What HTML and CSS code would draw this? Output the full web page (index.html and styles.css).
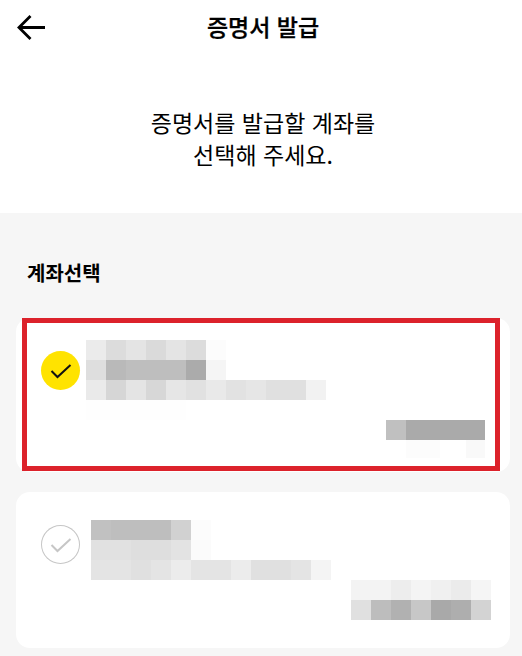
FILE: index.html
```
<!DOCTYPE html>
<html lang="ko">
<head>
    <meta charset="UTF-8">
    <meta name="viewport" content="width=device-width, initial-scale=1.0">
    <title>증명서 발급</title>
    <link rel="stylesheet" href="styles.css">
</head>
<body>
    <header class="header">
        <button class="back" aria-label="뒤로">
            <svg width="30" height="28" viewBox="0 0 30 28">
                <path d="M13.5 2 L2 13.5 L13.5 25 M2 13.5 H28"/>
            </svg>
        </button>
        <h1 class="title">증명서 발급</h1>
    </header>

    <p class="guide">증명서를 발급할 계좌를<br>선택해 주세요.</p>

    <main class="accounts">
        <h2 class="accounts-title">계좌선택</h2>

        <div class="card card-first">
            <div class="highlight"></div>
            <span class="check checked">
                <svg width="39" height="39" viewBox="0 0 39 39"><path d="M10.5 20 L16.5 26 L29.5 14"/></svg>
            </span>
            <div class="info">
                <!-- masked account name and number -->
                <svg class="mask" width="240" height="80" shape-rendering="crispEdges">
                    <rect x="0" y="0" width="20" height="20" fill="#ebebeb"/>
                    <rect x="20" y="0" width="20" height="20" fill="#dcdcdc"/>
                    <rect x="40" y="0" width="20" height="20" fill="#e4e4e4"/>
                    <rect x="60" y="0" width="20" height="20" fill="#dadada"/>
                    <rect x="80" y="0" width="20" height="20" fill="#e4e4e4"/>
                    <rect x="100" y="0" width="20" height="20" fill="#dcdcdc"/>
                    <rect x="120" y="0" width="20" height="20" fill="#fcfcfc"/>
                    <rect x="0" y="20" width="20" height="20" fill="#dedede"/>
                    <rect x="20" y="20" width="20" height="20" fill="#b9b9b9"/>
                    <rect x="40" y="20" width="60" height="20" fill="#bebebe"/>
                    <rect x="100" y="20" width="20" height="20" fill="#ababab"/>
                    <rect x="120" y="20" width="20" height="20" fill="#f5f5f5"/>
                    <rect x="0" y="40" width="20" height="20" fill="#eaeaea"/>
                    <rect x="20" y="40" width="20" height="20" fill="#d6d6d6"/>
                    <rect x="40" y="40" width="20" height="20" fill="#e4e4e4"/>
                    <rect x="60" y="40" width="20" height="20" fill="#d7d7d7"/>
                    <rect x="80" y="40" width="20" height="20" fill="#e6e6e6"/>
                    <rect x="100" y="40" width="20" height="20" fill="#e1e1e1"/>
                    <rect x="120" y="40" width="20" height="20" fill="#e9e9e9"/>
                    <rect x="140" y="40" width="20" height="20" fill="#e2e2e2"/>
                    <rect x="160" y="40" width="20" height="20" fill="#e6e6e6"/>
                    <rect x="180" y="40" width="40" height="20" fill="#e0e0e0"/>
                    <rect x="220" y="40" width="20" height="20" fill="#f2f2f2"/>
                    <rect x="0" y="60" width="100" height="20" fill="#fefefe"/>
                </svg>
                <!-- masked balance -->
                <svg class="mask mask-balance" width="99" height="38" shape-rendering="crispEdges">
                    <rect x="0" y="0" width="20" height="20" fill="#c0c0c0"/>
                    <rect x="20" y="0" width="79" height="20" fill="#aaaaaa"/>
                    <rect x="20" y="20" width="34" height="18" fill="#fcfcfc"/>
                    <rect x="80" y="20" width="19" height="18" fill="#f9f9f9"/>
                </svg>
            </div>
        </div>

        <div class="card card-second">
            <span class="check">
                <svg width="39" height="39" viewBox="0 0 39 39"><path d="M10.5 20 L16.5 26 L29.5 14"/></svg>
            </span>
            <div class="info">
                <svg class="mask" width="240" height="60" shape-rendering="crispEdges">
                    <rect x="0" y="0" width="20" height="20" fill="#c1c1c1"/>
                    <rect x="20" y="0" width="60" height="20" fill="#bebebe"/>
                    <rect x="80" y="0" width="20" height="20" fill="#d1d1d1"/>
                    <rect x="100" y="0" width="20" height="20" fill="#fcfcfc"/>
                    <rect x="0" y="20" width="40" height="20" fill="#e1e1e1"/>
                    <rect x="40" y="20" width="40" height="20" fill="#dedede"/>
                    <rect x="80" y="20" width="20" height="20" fill="#e3e3e3"/>
                    <rect x="100" y="20" width="20" height="20" fill="#fbfbfb"/>
                    <rect x="0" y="40" width="40" height="20" fill="#e4e4e4"/>
                    <rect x="40" y="40" width="20" height="20" fill="#e0e0e0"/>
                    <rect x="60" y="40" width="20" height="20" fill="#e4e4e4"/>
                    <rect x="80" y="40" width="20" height="20" fill="#ececec"/>
                    <rect x="100" y="40" width="40" height="20" fill="#e4e4e4"/>
                    <rect x="140" y="40" width="20" height="20" fill="#ececec"/>
                    <rect x="160" y="40" width="40" height="20" fill="#e0e0e0"/>
                    <rect x="200" y="40" width="20" height="20" fill="#e4e4e4"/>
                    <rect x="220" y="40" width="20" height="20" fill="#f4f4f4"/>
                </svg>
                <svg class="mask mask-balance" width="140" height="40" shape-rendering="crispEdges">
                    <rect x="0" y="0" width="40" height="20" fill="#f3f3f3"/>
                    <rect x="40" y="0" width="20" height="20" fill="#ededed"/>
                    <rect x="60" y="0" width="20" height="20" fill="#f4f4f4"/>
                    <rect x="80" y="0" width="20" height="20" fill="#f0f0f0"/>
                    <rect x="100" y="0" width="20" height="20" fill="#ebebeb"/>
                    <rect x="120" y="0" width="20" height="20" fill="#f5f5f5"/>
                    <rect x="0" y="20" width="20" height="20" fill="#e0e0e0"/>
                    <rect x="20" y="20" width="20" height="20" fill="#bdbdbd"/>
                    <rect x="40" y="20" width="20" height="20" fill="#b1b1b1"/>
                    <rect x="60" y="20" width="20" height="20" fill="#c7c7c7"/>
                    <rect x="80" y="20" width="20" height="20" fill="#a9a9a9"/>
                    <rect x="100" y="20" width="20" height="20" fill="#aeaeae"/>
                    <rect x="120" y="20" width="20" height="20" fill="#d3d3d3"/>
                </svg>
            </div>
        </div>
    </main>
</body>
</html>
```
FILE: styles.css
```
* {
    box-sizing: border-box;
}

body {
    margin: 0;
    height: 656px;
    display: flex;
    flex-direction: column;
    overflow: hidden;
    background-color: #fff;
    color: #000;
    font-family: "Noto Sans CJK KR", sans-serif;
}

.header {
    display: grid;
    grid-template-columns: 60px 1fr 56px;
    align-items: center;
    height: 56px;
}

.back {
    display: flex;
    padding: 0 0 0 17px;
    border: 0;
    background: none;
}

.back path {
    fill: none;
    stroke: #000;
    stroke-width: 2.8;
}

.title {
    margin: 0;
    font-size: 23px;
    font-weight: 500;
    line-height: 52px;
    padding-bottom: 4px;
    text-align: center;
    -webkit-text-stroke: 0.3px #000;
}

.guide {
    height: 157px;
    margin: 0;
    padding: 50px 0 0 4px;
    font-size: 23px;
    line-height: 32px;
    text-align: center;
}

.accounts {
    flex: 1;
    padding: 0 12px 0 16px;
    background-color: #f6f6f6;
}

.accounts-title {
    height: 105px;
    margin: 0;
    padding: 45px 0 0 11px;
    font-size: 20px;
    font-weight: 700;
    line-height: 30px;
}

.card {
    position: relative;
    display: flex;
    border-radius: 14px;
    background-color: #fff;
}

.card-first {
    height: 154px;
    margin-bottom: 20px;
    padding: 22px 25px 0;
}

.card-second {
    height: 156px;
    padding: 28px 19px 0 25px;
}

/* red frame over the selected account */
.highlight {
    position: absolute;
    top: 0;
    left: 6px;
    width: 478px;
    height: 153px;
    border: 5px solid #dc222b;
}

.check {
    width: 39px;
    height: 39px;
    margin-top: 5px;
    border-radius: 50%;
    box-shadow: inset 0 0 0 1px #c6c6c6;
}

.check svg {
    display: block;
}

.check path {
    fill: none;
    stroke: #c6c6c6;
    stroke-width: 2;
}

.card-first .check {
    margin-top: 11px;
}

.checked {
    background-color: #ffe300;
    box-shadow: none;
}

.checked path {
    stroke: #111;
}

.info {
    flex: 1;
    display: flex;
    flex-direction: column;
    padding-left: 6px;
}

.card-second .info {
    padding-left: 11px;
}

.mask {
    display: block;
}

.mask-balance {
    align-self: flex-end;
}
```
